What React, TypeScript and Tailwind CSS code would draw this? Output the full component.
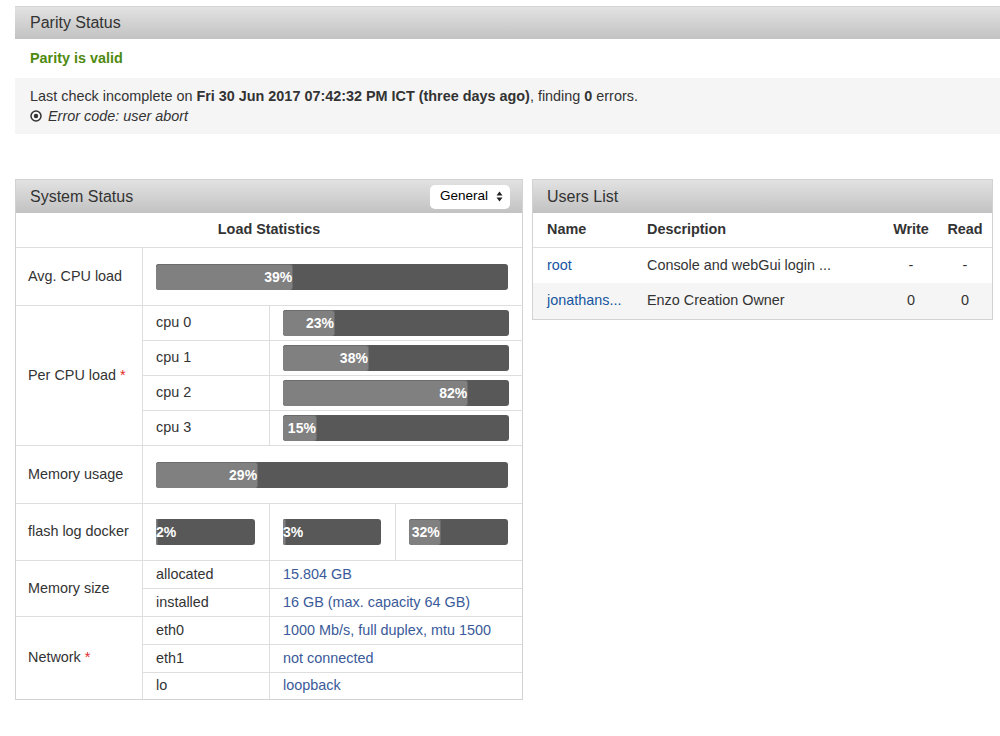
const font = { fontFamily: '"Liberation Sans", Arial, sans-serif' };

function Bar({ pct }: { pct: number }) {
  return (
    <div className="h-[26px] w-full overflow-visible rounded-[3px] bg-[#585858]">
      <div
        className="h-[26px] whitespace-nowrap rounded-[3px] border-t border-r border-[#6c6c6c] bg-[#808080] text-right text-[14px] font-bold leading-[25px] text-white"
        style={{ width: `${pct}%` }}
      >
        {pct}%
      </div>
    </div>
  );
}

function Star() {
  return <span className="ml-1 text-[#e22828]">*</span>;
}

const head = "bg-gradient-to-b from-[#e2e2e2] to-[#c2c2c2]";
const label = "flex items-center border-[#dedede] px-3";
const cell = "flex items-center border-[#dedede] pl-[13px] pr-3";
const barCell = "flex items-center border-[#dedede] pl-[13px] pr-[14px]";
const users = "grid grid-cols-[100px_239px_60px_38px] pr-[8px] pl-[14px]";

export default function App() {
  return (
    <div className="min-h-[736px] bg-white pt-[6px] pl-[15px] text-[14.4px] text-[#333]" style={font}>
      {/* parity */}
      <div className={`flex h-[33px] items-center border-t border-[#d4d4d4] pl-[15px] text-[16px] ${head}`}>
        Parity Status
      </div>
      <div className="flex h-[39px] items-center pl-[15px] font-bold text-[#4f8a10]">Parity is valid</div>
      <div className="bg-[#f5f5f5] py-2 pl-[15px] leading-5">
        <div>
          Last check incomplete on <b>Fri 30 Jun 2017 07:42:32 PM ICT (three days ago)</b>, finding <b>0</b> errors.
        </div>
        <div className="flex items-center gap-1 italic">
          <svg width="12" height="12" viewBox="0 0 12 12" className="mr-[2px]">
            <circle cx="6" cy="6" r="5" fill="none" stroke="#333" strokeWidth="1.5" />
            <circle cx="6" cy="6" r="2.2" fill="#333" />
          </svg>
          Error code: user abort
        </div>
      </div>

      <div className="mt-[45px] flex items-start gap-[9px]">
        {/* system status */}
        <div className="w-[508px] border border-[#d2d2d2]">
          <div className={`flex h-[33px] items-center justify-between pr-[12px] pl-[14px] text-[16px] ${head}`}>
            <span>System Status</span>
            <div className="flex h-[24px] w-[80px] items-center justify-between rounded-[5px] bg-white pr-[7px] pl-[10px] text-[13.5px] text-black">
              General
              <svg width="7" height="11" viewBox="0 0 7 11">
                <path d="M3.5 0.5 L6.5 4.5 H0.5 Z M3.5 10.5 L6.5 6.5 H0.5 Z" fill="#222" />
              </svg>
            </div>
          </div>
          <div className="grid grid-cols-[127px_127px_126px_126px] grid-rows-[34px_58px_35px_35px_35px_35px_58px_57px_28px_28px_28px_28px_27px]">
            <div className="col-span-4 flex items-center justify-center font-bold">Load Statistics</div>

            <div className={`${label} border-t border-r`}>Avg. CPU load</div>
            <div className={`${barCell} col-span-3 border-t`}><Bar pct={39} /></div>

            <div className={`${label} row-span-4 border-t border-r`}>Per CPU load<Star /></div>
            {[23, 38, 82, 15].map((p, i) => (
              <div key={i} className="col-span-3 grid grid-cols-[127px_253px]">
                <div className={`${cell} border-t border-r`}>cpu {i}</div>
                <div className={`${barCell} border-t`}><Bar pct={p} /></div>
              </div>
            ))}

            <div className={`${label} border-t border-r`}>Memory usage</div>
            <div className={`${barCell} col-span-3 border-t`}><Bar pct={29} /></div>

            <div className={`${label} border-t border-r`}>flash log docker</div>
            <div className={`${barCell} border-t border-r`}><Bar pct={2} /></div>
            <div className={`${barCell} border-t border-r`}><Bar pct={3} /></div>
            <div className={`${barCell} border-t`}><Bar pct={32} /></div>

            <div className={`${label} row-span-2 border-t border-r`}>Memory size</div>
            <div className={`${cell} border-t border-r`}>allocated</div>
            <div className={`${cell} col-span-2 border-t text-[#3a5a99]`}>15.804 GB</div>
            <div className={`${cell} border-t border-r`}>installed</div>
            <div className={`${cell} col-span-2 border-t text-[#3a5a99]`}>16 GB (max. capacity 64 GB)</div>

            <div className={`${label} row-span-3 border-t border-r`}>Network<Star /></div>
            <div className={`${cell} border-t border-r`}>eth0</div>
            <div className={`${cell} col-span-2 border-t text-[#3a5a99]`}>1000 Mb/s, full duplex, mtu 1500</div>
            <div className={`${cell} border-t border-r`}>eth1</div>
            <div className={`${cell} col-span-2 border-t text-[#3a5a99]`}>not connected</div>
            <div className={`${cell} border-t border-r`}>lo</div>
            <div className={`${cell} col-span-2 border-t text-[#3a5a99]`}>loopback</div>
          </div>
        </div>

        {/* users list */}
        <div className="w-[461px] border border-[#d2d2d2]">
          <div className={`flex h-[33px] items-center pl-[14px] text-[16px] ${head}`}>Users List</div>
          <div className={`${users} h-[34px] items-center font-bold`}>
            <span>Name</span>
            <span>Description</span>
            <span className="pr-[10px] text-center">Write</span>
            <span className="text-center">Read</span>
          </div>
          <div className={`${users} h-[36px] items-center border-t border-[#dedede]`}>
            <span className="text-[#1555a0]">root</span>
            <span>Console and webGui login ...</span>
            <span className="pr-[10px] text-center">-</span>
            <span className="text-center">-</span>
          </div>
          <div className={`${users} h-[36px] items-center bg-[#f5f5f5]`}>
            <span className="text-[#1555a0]">jonathans...</span>
            <span>Enzo Creation Owner</span>
            <span className="pr-[10px] text-center">0</span>
            <span className="text-center">0</span>
          </div>
        </div>
      </div>
    </div>
  );
}
